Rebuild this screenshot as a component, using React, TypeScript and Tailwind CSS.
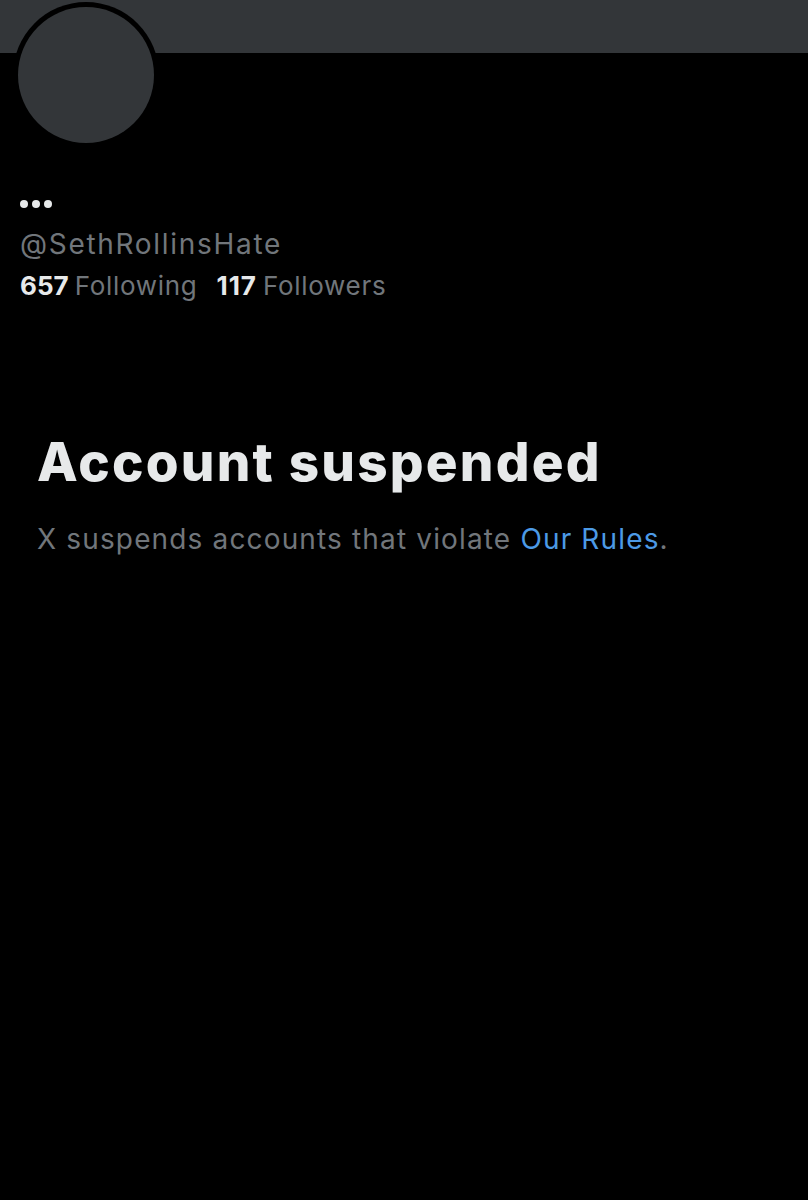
export default function App() {
  return (
    <div className="w-[808px] h-[1200px] bg-black overflow-hidden" style={{ fontFamily: "Inter, 'Noto Sans', sans-serif" }}>
      <div className="h-[53px] bg-[#333639]" />
      <div className="relative h-[146px]">
        <div className="absolute left-[13px] top-[-51px] w-[146px] h-[146px] rounded-full bg-black p-[5px]">
          <div className="w-full h-full rounded-full bg-[#333639]" />
        </div>
      </div>
      <div className="pl-[20px]">
        <div className="flex gap-[4px] h-[10px] items-center">
          <span className="w-[8px] h-[8px] rounded-full bg-[#e7e9ea]" />
          <span className="w-[8px] h-[8px] rounded-full bg-[#e7e9ea]" />
          <span className="w-[8px] h-[8px] rounded-full bg-[#e7e9ea]" />
        </div>
        <div className="mt-[19px] text-[28px] leading-[32px] tracking-[1.7px] text-[#71767b]">@SethRollinsHate</div>
        <div className="mt-[10px] flex text-[26px] leading-[32px]">
          <span className="font-bold text-[#e7e9ea]">657</span>
          <span className="ml-[6px] text-[#71767b] tracking-[0.7px]">Following</span>
          <span className="ml-[19px] font-bold text-[#e7e9ea] tracking-[1px]">117</span>
          <span className="ml-[6px] text-[#71767b] tracking-[0.7px]">Followers</span>
        </div>
      </div>
      <div className="pl-[37px] mt-[130px]">
        <div className="text-[53px] leading-[60px] font-extrabold text-[#e7e9ea] tracking-[2.2px]">Account suspended</div>
        <div className="mt-[30px] text-[28px] leading-[34px] tracking-[1.15px] text-[#71767b]">
          X suspends accounts that violate <span className="text-[#4c9ae6]">Our Rules</span>.
        </div>
      </div>
    </div>
  );
}
